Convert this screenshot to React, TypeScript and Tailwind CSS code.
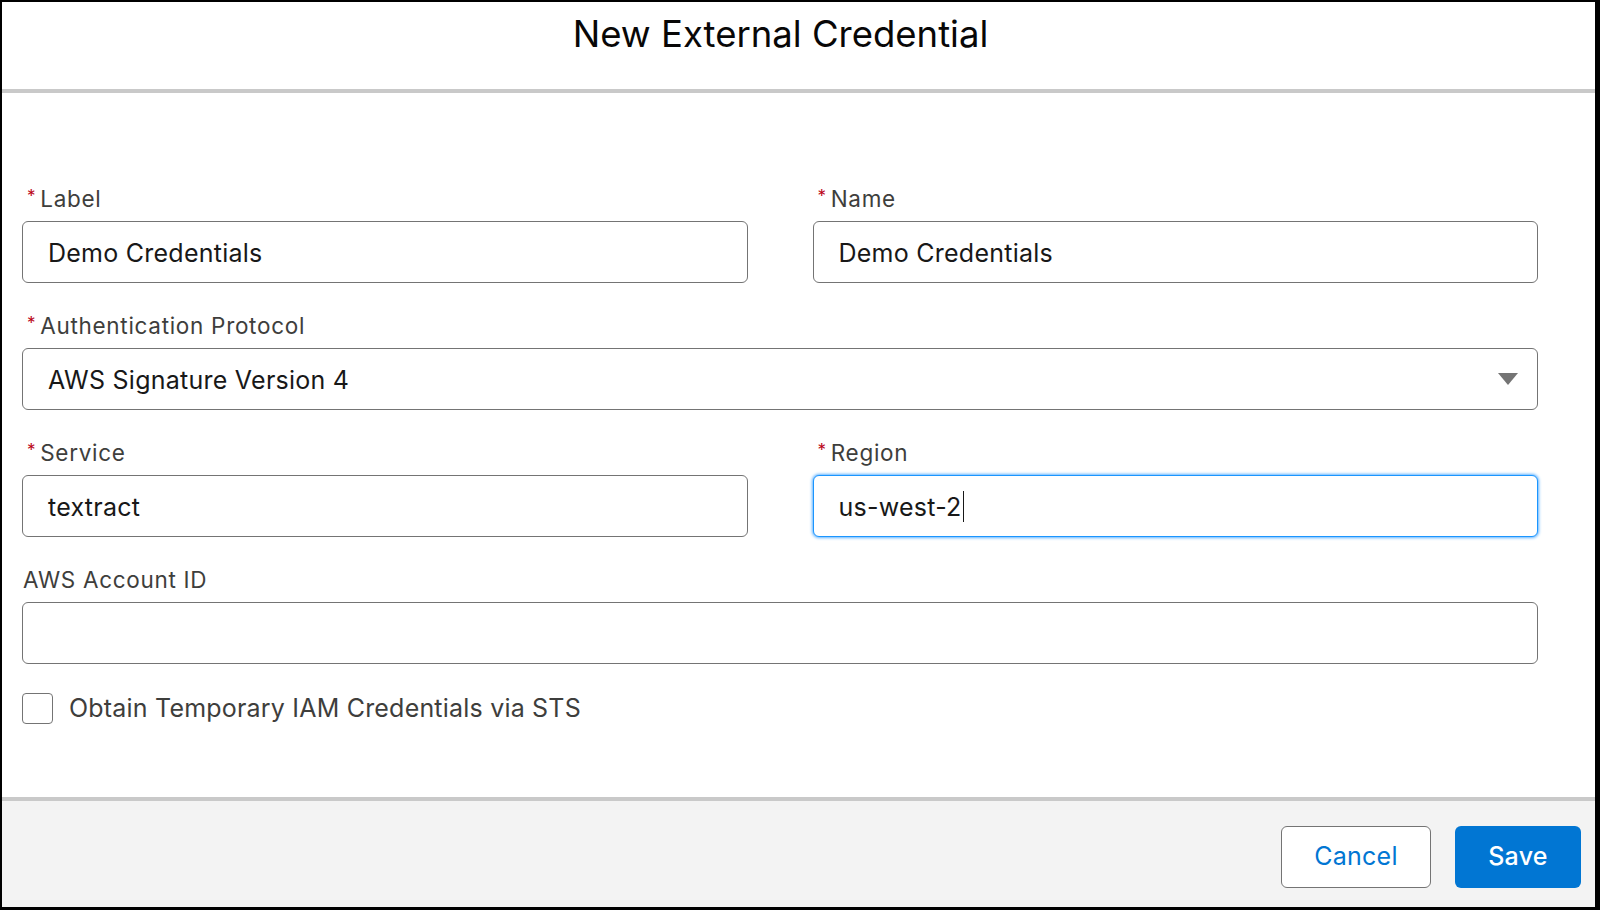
function Label({ text, required }: { text: string; required?: boolean }) {
  return (
    <div className="h-[26px] mb-[9px] flex items-center text-[22.5px] tracking-[0.7px] text-[#3e3e3c] leading-none">
      {required && <span className="text-[#ba0517] text-[17px] mr-[4px] ml-[5px] -mt-[6px]">*</span>}
      <span>{text}</span>
    </div>
  )
}

function TextInput({ value, focused }: { value: string; focused?: boolean }) {
  return (
    <div
      className={
        focused
          ? 'h-[62px] rounded-[6px] border border-[#1b96ff] shadow-[0_0_3px_1px_#5fb2ff] bg-white flex items-center pl-[25px] pt-[3px] text-[25px] tracking-[0.25px] text-[#181818]'
          : 'h-[62px] rounded-[6px] border border-[#747474] bg-white flex items-center pl-[25px] pt-[3px] text-[25px] tracking-[0.25px] text-[#181818]'
      }
    >
      <span>{value}</span>
      {focused && <span className="w-[1.5px] h-[31px] bg-[#181818] ml-[1px] -mt-[3px]" />}
    </div>
  )
}

export default function App() {
  return (
    <div className="w-[1600px] h-[910px] bg-black pl-[2px] pt-[2px] pr-[5px] pb-[3px]" style={{ fontFamily: 'Inter, "Liberation Sans", sans-serif' }}>
      <div className="w-full h-full bg-white flex flex-col">
        <header className="h-[87px] flex items-start justify-center pt-[14px] pr-[36px] text-[36.5px] leading-none text-[#080707]">
          New External Credential
        </header>
        <div className="h-[4px] bg-[#c9c9c9]" />

        <div className="flex-1 pt-[93px] pl-[20px] pr-[57px]">
          <div className="grid grid-cols-2 gap-x-[65px]">
            <div>
              <Label text="Label" required />
              <TextInput value="Demo Credentials" />
            </div>
            <div>
              <Label text="Name" required />
              <TextInput value="Demo Credentials" />
            </div>
          </div>

          <div className="mt-[30px]">
            <Label text="Authentication Protocol" required />
            <div className="h-[62px] rounded-[6px] border border-[#747474] bg-white flex items-center justify-between pl-[25px] pt-[3px] pr-[18px] text-[25px] tracking-[0.25px] text-[#181818]">
              <span>AWS Signature Version 4</span>
              <svg width="22" height="14" viewBox="0 0 22 14" className="-mt-[3px]">
                <path d="M1 1 L21 1 L11 13 Z" fill="#747474" />
              </svg>
            </div>
          </div>

          <div className="grid grid-cols-2 gap-x-[65px] mt-[30px]">
            <div>
              <Label text="Service" required />
              <TextInput value="textract" />
            </div>
            <div>
              <Label text="Region" required />
              <TextInput value="us-west-2" focused />
            </div>
          </div>

          <div className="mt-[30px]">
            <div className="h-[26px] mb-[9px] flex items-center text-[22.5px] tracking-[0.7px] text-[#3e3e3c] leading-none pl-[1px]">
              AWS Account ID
            </div>
            <TextInput value="" />
          </div>

          <label className="mt-[26px] flex items-center gap-[16px] text-[25px] tracking-[0.2px] text-[#3e3e3c]">
            <span className="w-[31px] h-[31px] rounded-[4px] border border-[#747474] bg-white" />
            <span>Obtain Temporary IAM Credentials via STS</span>
          </label>
        </div>

        <div className="h-[4px] bg-[#c9c9c9]" />
        <footer className="h-[106px] bg-[#f3f3f3] flex items-start justify-end gap-[24px] pt-[25px] pr-[14px]">
          <button className="w-[150px] h-[62px] rounded-[6px] border border-[#747474] bg-white text-[#0176d3] text-[25px] tracking-[0.25px]">
            Cancel
          </button>
          <button className="w-[126px] h-[62px] rounded-[6px] bg-[#0176d3] text-white text-[25px] tracking-[0.25px] font-medium">
            Save
          </button>
        </footer>
      </div>
    </div>
  )
}
